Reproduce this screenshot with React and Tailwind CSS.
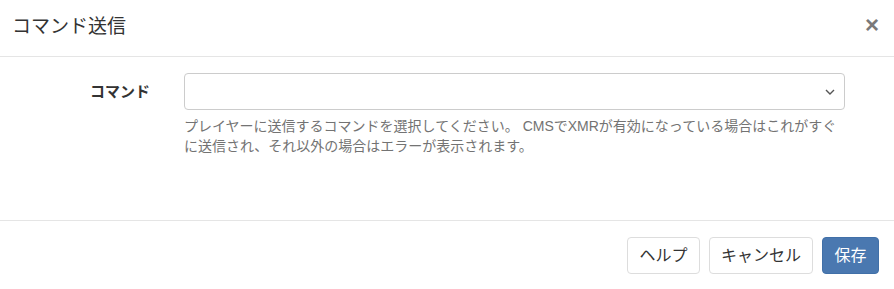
export default function App() {
  const font = { fontFamily: '"Liberation Sans", "Noto Sans CJK JP", sans-serif' };
  return (
    <div className="w-[894px] h-[289px] bg-white text-[#333]" style={font}>
      {/* HEADER */}
      <div className="h-[57px] flex items-center justify-between pl-[12px] pr-[15px] border-b border-[#e5e5e5]">
        <h4 className="text-[19px] leading-none text-[#333] -mt-[4px]">コマンド送信</h4>
        <button className="text-[#7a7a7a] text-[24px] font-bold leading-none -mt-[6px]">×</button>
      </div>

      {/* BODY */}
      <div className="h-[163px] pt-[16px]">
        <div className="flex items-start">
          <label className="w-[150px] text-right font-bold text-[15px] leading-[37px] text-[#333]">
            コマンド
          </label>
          <div className="ml-[34px] w-[661px]">
            <div className="h-[37px] border border-[#ccc] rounded-[4px] flex items-center justify-end pr-[8px]">
              <svg width="12" height="8" viewBox="0 0 12 8" fill="none" stroke="#555" strokeWidth="1.4">
                <path d="M2 2l4 4 4-4" />
              </svg>
            </div>
            <p className="mt-[6px] text-[14px] leading-[20px] text-[#737373]">
              プレイヤーに送信するコマンドを選択してください。 CMSでXMRが有効になっている場合はこれがすぐに送信され、それ以外の場合はエラーが表示されます。
            </p>
          </div>
        </div>
      </div>

      {/* FOOTER */}
      <div className="border-t border-[#e5e5e5] flex justify-end gap-[9px] pt-[16px] pr-[15px]">
        <button className="h-[37px] px-[11.5px] border border-[#ddd] rounded-[4px] text-[16px] text-[#333] bg-white">
          ヘルプ
        </button>
        <button className="h-[37px] px-[11px] border border-[#ddd] rounded-[4px] text-[16px] text-[#333] bg-white">
          キャンセル
        </button>
        <button className="h-[37px] px-[11.5px] border border-[#4170a8] rounded-[4px] text-[16px] text-white bg-[#4a78b0]">
          保存
        </button>
      </div>
    </div>
  );
}
